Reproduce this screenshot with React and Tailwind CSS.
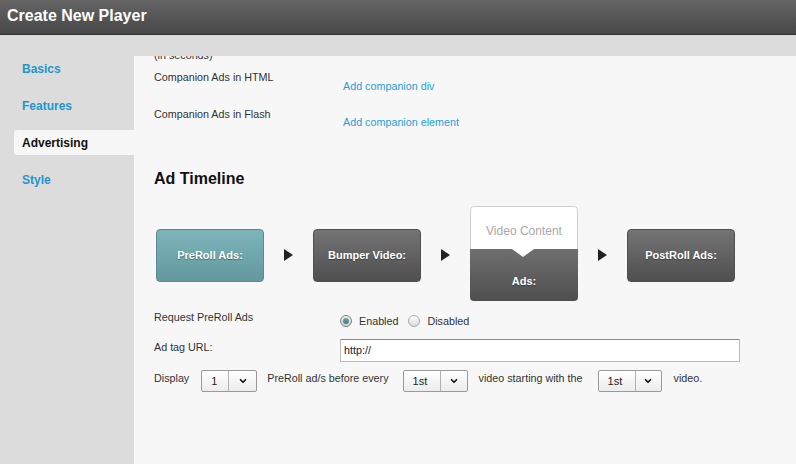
import { ChevronDown } from "lucide-react";

const navItems = ["Basics", "Features", "Advertising", "Style"];

function Arrow() {
    return (
        <div className="mt-[43px] w-0 h-0 border-t-[6.5px] border-b-[6.5px] border-l-[9px] border-t-transparent border-b-transparent border-l-[#222]" />
    );
}

function AdBox({ label, teal }) {
    return (
        <div
            className={`mt-[23px] w-[108px] h-[53px] rounded-[4px] border flex items-center justify-center text-white font-bold text-[11px] [text-shadow:0_1px_1px_rgba(0,0,0,0.35)] ${
                teal
                    ? "bg-gradient-to-b from-[#7eb5bb] to-[#62989e] border-[#5a8b91]"
                    : "bg-gradient-to-b from-[#747474] to-[#4f4f4f] border-[#505050]"
            }`}
        >
            {label}
        </div>
    );
}

function Select({ value, left, right }) {
    return (
        <div className="h-[22px] flex rounded-[2px] border border-[#9a9a9a] bg-gradient-to-b from-white to-[#ececec] text-[11px] text-[#222]">
            <div className={`${left} pl-[9px] pt-[4px] border-r border-[#b0b0b0]`}>{value}</div>
            <div className={`${right} flex items-center justify-center`}>
                <ChevronDown size={10} strokeWidth={4} color="#111" />
            </div>
        </div>
    );
}

function Radio({ checked }) {
    return (
        <div
            className={`w-[12px] h-[12px] rounded-full border flex items-center justify-center ${
                checked
                    ? "border-[#7d7d7d] bg-gradient-to-b from-[#f2f2f2] to-[#cfcfcf]"
                    : "border-[#a8a8a8] bg-gradient-to-b from-white to-[#dadada]"
            }`}
        >
            {checked && <div className="w-[6px] h-[6px] rounded-full bg-gradient-to-b from-[#6aa4aa] to-[#3f7d83]" />}
        </div>
    );
}

export default function App() {
    return (
        <div className="w-[796px] h-[464px] overflow-hidden bg-[#dcdcdc] font-['Liberation_Sans',Arial,sans-serif] flex flex-col">
            <div className="h-[35px] shrink-0 bg-gradient-to-b from-[#646564] to-[#464746] border-b border-[#2f2f2f] flex items-center px-[7px]">
                <h1 className="text-white font-bold text-[16px] leading-none mt-[-2px]">Create New Player</h1>
            </div>

            <div className="flex flex-1 min-h-0">
                <div className="w-[134px] shrink-0 pt-[21px]">
                    {navItems.map((item) => (
                        <div
                            key={item}
                            className={`h-[25px] mb-[12px] flex items-center font-bold text-[12px] ${
                                item === "Advertising"
                                    ? "ml-[14px] pl-[8px] bg-[#f7f7f7] rounded-l-[3px] text-[#111]"
                                    : "pl-[22px] text-[#2396cb]"
                            }`}
                        >
                            {item}
                        </div>
                    ))}
                </div>

                <div className="flex-1 mt-[21px] bg-[#f7f7f7] overflow-hidden pl-[20px] text-[10.75px] leading-[13px] text-[#333]">
                    <div className="mt-[-7px]">(in seconds)</div>

                    <div className="mt-[8.5px] flex items-start h-[37px]">
                        <div className="w-[189px]">Companion Ads in HTML</div>
                        <div className="mt-[9px] text-[#2a9fd6]">Add companion div</div>
                    </div>
                    <div className="flex items-start h-[37px]">
                        <div className="w-[189px]">Companion Ads in Flash</div>
                        <div className="mt-[8px] text-[#2a9fd6]">Add companion element</div>
                    </div>

                    <h2 className="mt-[24px] text-[16px] leading-[19px] font-bold text-[#111]">Ad Timeline</h2>

                    <div className="mt-[18px] ml-[2px] flex items-start gap-[20px] h-[95px]">
                        <AdBox label="PreRoll Ads:" teal />
                        <Arrow />
                        <AdBox label="Bumper Video:" />
                        <Arrow />
                        <div className="w-[108px] h-[95px] flex flex-col rounded-[4px] overflow-hidden">
                            <div className="h-[43px] bg-white border border-b-0 border-[#cfcfcf] rounded-t-[4px] text-center text-[12px] leading-[14px] text-[#a9a9a9] pt-[17px]">
                                Video Content
                            </div>
                            <div className="relative flex-1 bg-gradient-to-b from-[#6f6f6f] to-[#4f4f4f] flex items-end justify-center pb-[13px] text-white font-bold text-[11px] [text-shadow:0_1px_1px_rgba(0,0,0,0.35)]">
                                <div className="absolute top-0 left-[42px] w-0 h-0 border-l-[11px] border-r-[11px] border-t-[8px] border-l-transparent border-r-transparent border-t-white" />
                                Ads:
                            </div>
                        </div>
                        <Arrow />
                        <AdBox label="PostRoll Ads:" />
                    </div>

                    <div className="mt-[10px] flex items-start h-[19px]">
                        <div className="w-[186px]">Request PreRoll Ads</div>
                        <div className="mt-[4px] flex items-center">
                            <Radio checked />
                            <span className="ml-[7px]">Enabled</span>
                            <div className="ml-[10px]"><Radio /></div>
                            <span className="ml-[7px]">Disabled</span>
                        </div>
                    </div>

                    <div className="mt-[9px] flex items-start">
                        <div className="w-[186px] mt-[2.5px]">Ad tag URL:</div>
                        <div className="w-[400px] h-[23px] bg-white border border-[#bdbdbd] border-t-[#8a8a8a] pl-[3px] pt-[4px] text-[#222]">
                            http://
                        </div>
                    </div>

                    <div className="mt-[8px] flex items-start">
                        <div className="mt-[2.5px]">Display</div>
                        <div className="ml-[12px]">
                            <Select value="1" left="w-[27px]" right="w-[27px]" />
                        </div>
                        <div className="ml-[10px] mt-[2.5px]">PreRoll ad/s before every</div>
                        <div className="ml-[14px]">
                            <Select value="1st" left="w-[37px]" right="w-[26px]" />
                        </div>
                        <div className="ml-[11px] mt-[2.5px]">video starting with the</div>
                        <div className="ml-[15px]">
                            <Select value="1st" left="w-[37px]" right="w-[25px]" />
                        </div>
                        <div className="ml-[12px] mt-[2.5px]">video.</div>
                    </div>
                </div>
            </div>
        </div>
    );
}
